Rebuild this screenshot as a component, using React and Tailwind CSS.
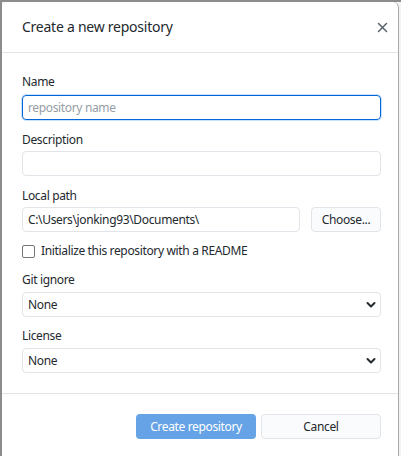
import React from "react";

const font = { fontFamily: '"Noto Sans", "Open Sans", sans-serif' };

function Chevron() {
  return (
    <svg width="10" height="8" viewBox="0 0 10 8" className="absolute right-[4px] top-[8px]">
      <path d="M1.5 2 L5 5.5 L8.5 2" fill="none" stroke="#24292e" strokeWidth="2" strokeLinecap="round" strokeLinejoin="round" />
    </svg>
  );
}

export default function App() {
  return (
    <div className="w-[401px] h-[456px] bg-[#f3f3f3] border-t-2 border-l-2 border-[#8c8c8c] overflow-hidden tracking-[-0.35px]" style={font}>
      <div className="bg-white w-[397px] h-[460px] rounded-t-[6px] border-r border-[#a9a9a9] flex flex-col text-[#24292e]">
        <div className="h-[51px] shrink-0 border-b border-[#e1e4e8] flex items-center justify-between pl-[20px] pr-[10px]">
          <div className="text-[14px] tracking-[-0.25px] leading-none">Create a new repository</div>
          <svg width="11" height="11" viewBox="0 0 11 11">
            <path d="M1.5 1.5 L9.5 9.5 M9.5 1.5 L1.5 9.5" stroke="#586069" strokeWidth="1.5" strokeLinecap="round" />
          </svg>
        </div>
        <div className="pl-[20px] pr-[17px] pt-[20px] flex flex-col text-[12px]">
          <label className="leading-[18px] mb-[4px]">Name</label>
          <input
            className="h-[25px] border border-[#0366d6] rounded-[4px] px-[5px] outline-none shadow-[0_0_0_1px_#c8e1ff] text-[12px] tracking-[-0.35px] placeholder-[#959da5]"
            placeholder="repository name"
          />
          <label className="leading-[16px] mt-[12px] mb-[3px]">Description</label>
          <input className="h-[25px] border border-[#e1e4e8] rounded-[4px] px-[5px] outline-none text-[12px]" />
          <label className="leading-[16px] mt-[12px] mb-[3px]">Local path</label>
          <div className="flex gap-[11px]">
            <input
              className="flex-1 min-w-0 h-[25px] border border-[#e1e4e8] rounded-[4px] px-[5px] outline-none text-[12px] tracking-[-0.35px] text-[#24292e]"
              defaultValue="C:\Users\jonking93\Documents\"
            />
            <button className="h-[25px] w-[70px] border border-[#e1e4e8] rounded-[4px] bg-[#fafbfc] text-[12px]">Choose...</button>
          </div>
          <div className="flex items-center mt-[11px] h-[16px]">
            <span className="w-[13px] h-[13px] border border-[#767676] rounded-[2px] mr-[6px]"></span>
            <span>Initialize this repository with a README</span>
          </div>
          <label className="leading-[16px] mt-[13px] mb-[4px]">Git ignore</label>
          <div className="relative h-[25px] border border-[#e1e4e8] rounded-[4px] px-[5px] flex items-center">
            None
            <Chevron />
          </div>
          <label className="leading-[16px] mt-[11px] mb-[4px]">License</label>
          <div className="relative h-[25px] border border-[#e1e4e8] rounded-[4px] px-[5px] flex items-center">
            None
            <Chevron />
          </div>
        </div>
        <div className="mt-[20px] border-t border-[#e1e4e8] flex justify-end gap-[5px] pr-[17px] pt-[20px] text-[12px]">
          <button className="h-[25px] w-[120px] rounded-[4px] bg-[#66a3e6] text-white">Create repository</button>
          <button className="h-[25px] w-[120px] rounded-[4px] border border-[#e1e4e8] bg-[#fafbfc]">Cancel</button>
        </div>
      </div>
    </div>
  );
}
